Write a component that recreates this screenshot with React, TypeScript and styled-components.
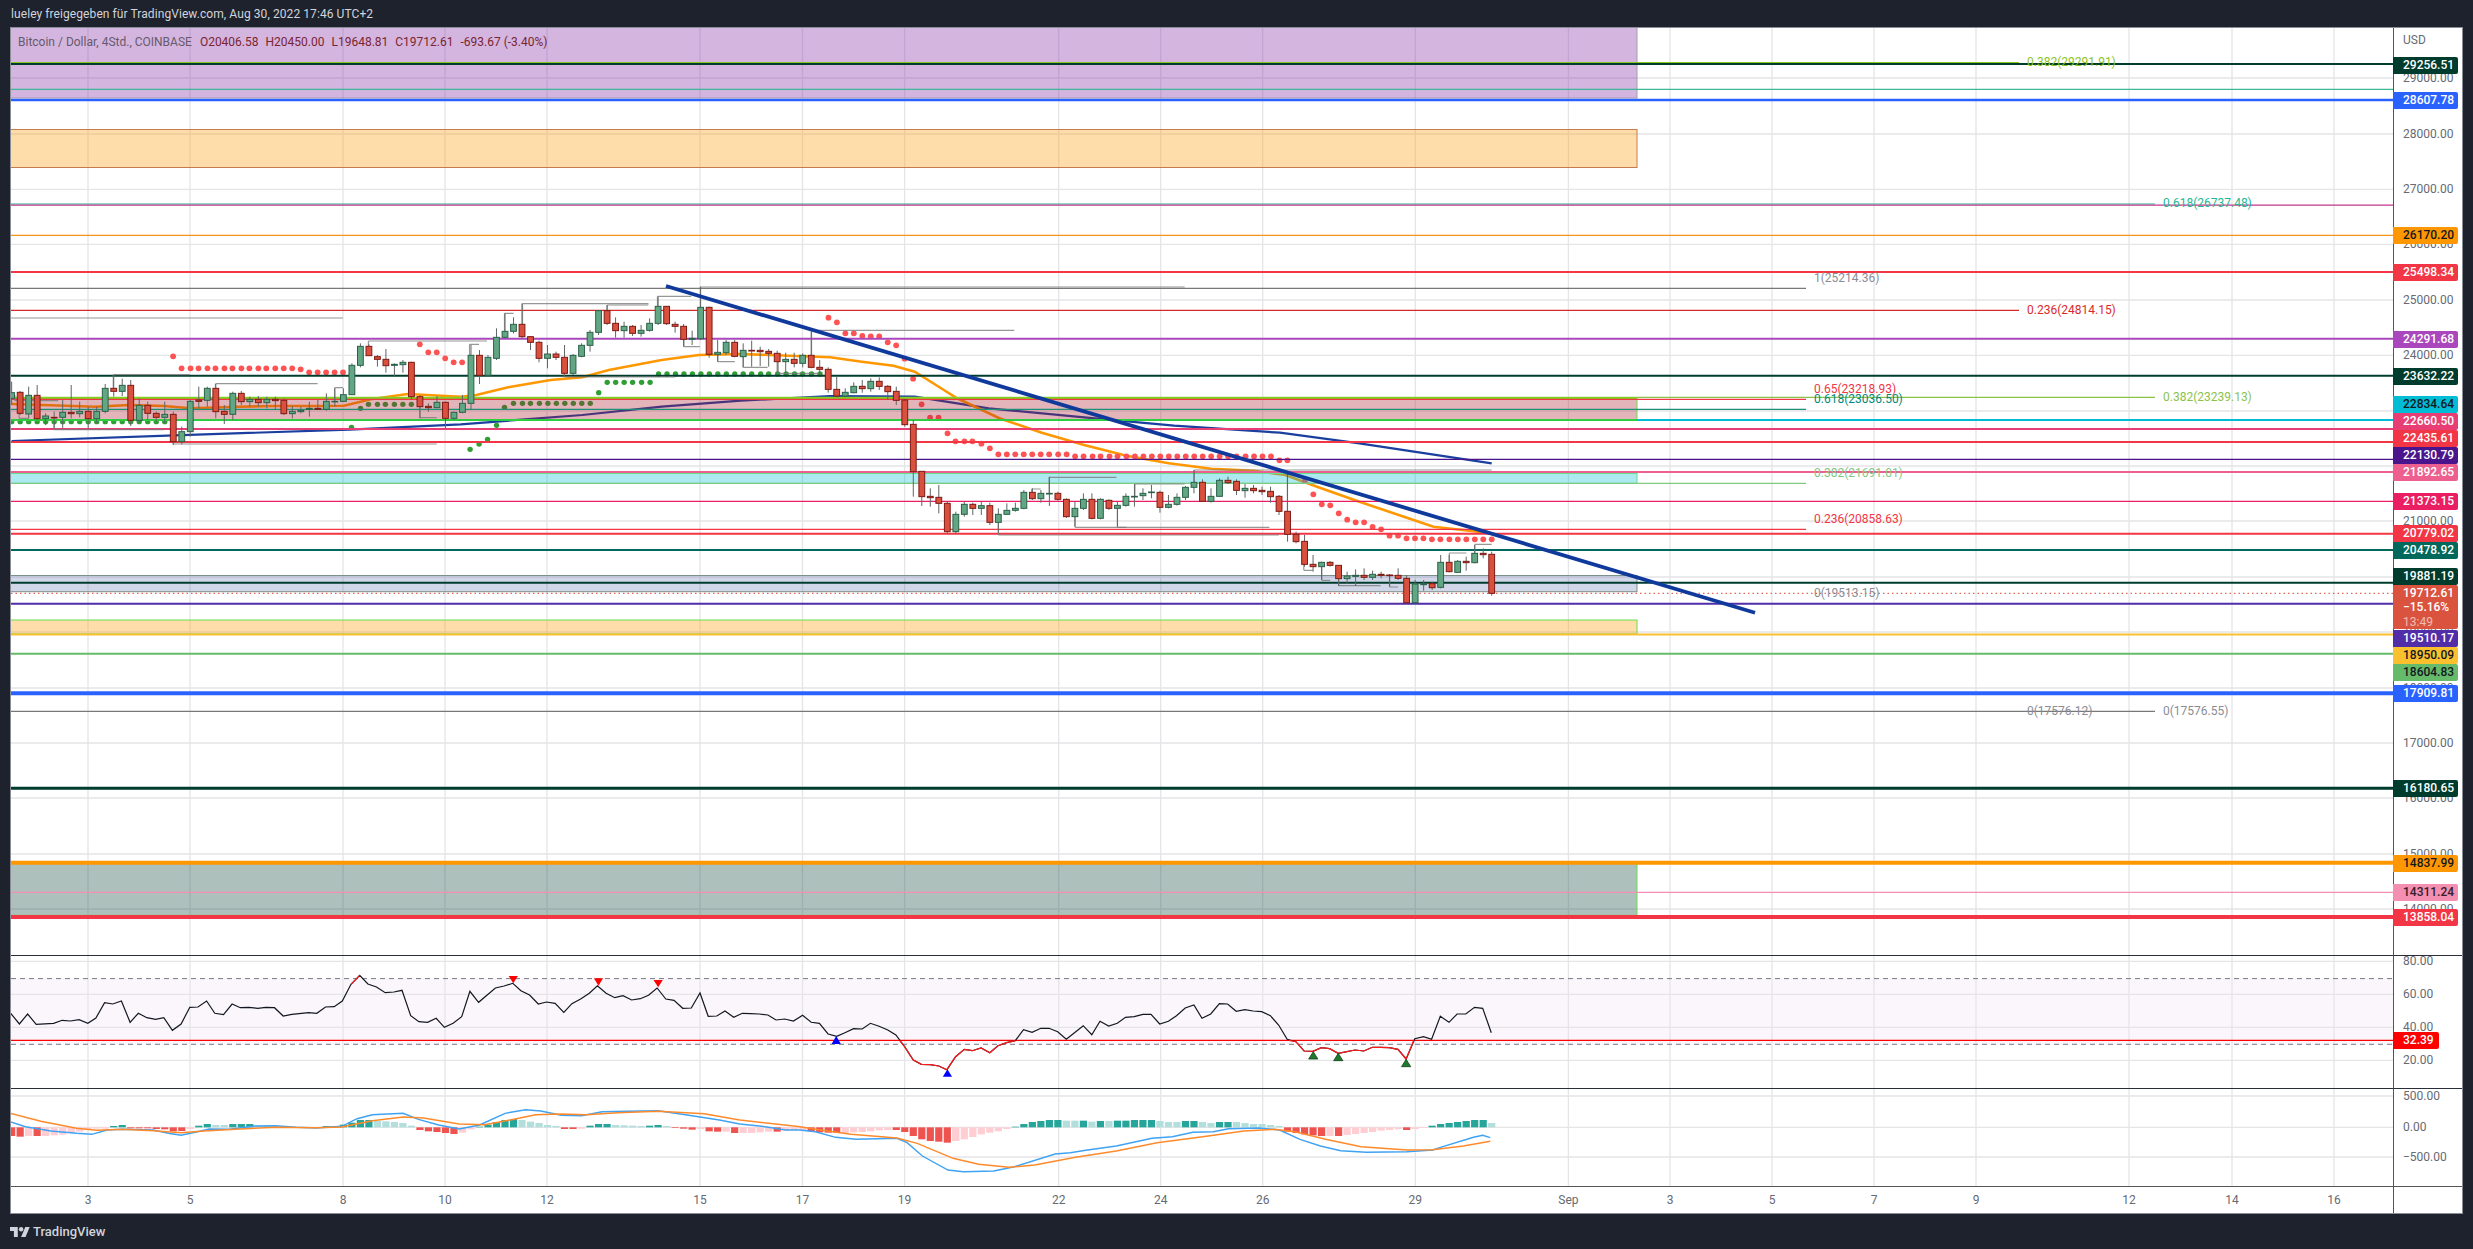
import React from "react";
import styled, { createGlobalStyle } from "styled-components";

const Global = createGlobalStyle`
  html, body { margin: 0; padding: 0; background: #1e222d; }
  body { font-family: Roboto, "Liberation Sans", sans-serif; }
`;

const Page = styled.div`
  width: 2473px;
  height: 1249px;
  background: #1e222d;
  display: flex;
  flex-direction: column;
  overflow: hidden;
`;
const Header = styled.header`
  height: 27px;
  padding-left: 11px;
  display: flex;
  align-items: center;
  color: #d1d4dc;
  font-size: 12px;
  letter-spacing: 0.08px;
`;
const Frame = styled.main`
  width: 2453px;
  margin-left: 10px;
  box-sizing: border-box;
  background: #fff;
  border: 1px solid #8a8d96;
  display: grid;
  grid-template-columns: 2382px 69px;
  grid-template-rows: 928px 133px 98px 26px;
`;
const ChartPane = styled.section<{ $line?: string }>`
  position: relative;
  box-sizing: border-box;
  border-bottom: 1px solid ${(p) => p.$line || "transparent"};
`;
const AxisPane = styled.section<{ $line?: string }>`
  position: relative;
  box-sizing: border-box;
  border-left: 1px solid #555;
  border-bottom: 1px solid ${(p) => p.$line || "transparent"};
`;
const PaneSvg = styled.svg`
  display: block;
`;
const Legend = styled.div`
  position: absolute;
  left: 7px;
  top: 7px;
  display: flex;
  gap: 7px;
  font-size: 12px;
  line-height: 15px;
  white-space: nowrap;
`;
const LegendTitle = styled.span`
  color: #675a6d;
  margin-right: 1px;
`;
const LegendValue = styled.span`
  color: #7c2430;
`;
const FibText = styled.text`
  font-family: Roboto, "Liberation Sans", sans-serif;
  font-size: 12px;
  dominant-baseline: central;
`;
const Unit = styled.div`
  position: absolute;
  left: 9px;
  top: 5px;
  font-size: 12px;
  line-height: 15px;
  color: #666a73;
`;
const ScaleLabel = styled.div`
  position: absolute;
  left: 9px;
  font-size: 12px;
  line-height: 16px;
  height: 16px;
  margin-top: -8px;
  color: #666a73;
`;
const Tag = styled.div<{ $bg: string; $fg: string }>`
  position: absolute;
  left: -1px;
  width: 65px;
  height: 17px;
  box-sizing: border-box;
  padding-left: 10px;
  font-size: 12px;
  font-weight: 500;
  line-height: 17px;
  background: ${(p) => p.$bg};
  color: ${(p) => p.$fg};
  border-radius: 0 2px 2px 0;
`;
const CountdownTag = styled.div`
  position: absolute;
  left: -1px;
  top: 557px;
  width: 65px;
  height: 44px;
  box-sizing: border-box;
  padding: 1px 0 0 10px;
  font-size: 12px;
  font-weight: 500;
  line-height: 14.3px;
  background: #d9533f;
  color: #fff;
  border-radius: 0 2px 2px 0;
`;
const CountdownFaint = styled.div`
  opacity: 0.6;
  font-weight: 400;
`;
const RsiTag = styled(Tag)`
  width: 46px;
`;
const TimeAxis = styled.div`
  position: relative;
  height: 26px;
`;
const TimeLabel = styled.span`
  position: absolute;
  top: 6px;
  transform: translateX(-50%);
  font-size: 12px;
  line-height: 15px;
  color: #666a73;
`;
const Corner = styled.div`
  border-left: 1px solid #555;
`;
const Footer = styled.footer`
  flex: 1;
  padding-left: 10px;
  display: flex;
  align-items: center;
  gap: 3px;
  color: #d1d4dc;
  font-size: 13px;
  font-weight: 500;
`;

// coordinate helpers: crops of the chart mapped back to page pixels
const x2 = (p: number) => p / 1.889;
const x3 = (p: number) => 830 + p / 1.889;
const yy = (p: number) => 280 + p / 3;
const x7 = (p: number) => p / 1.96;
const x8 = (p: number) => 800 + p / 1.96;
const y7 = (p: number) => 950 + p / 3;
type P = number[];
const pts = (l: P[], fx: (n: number) => number, fy: (n: number) => number) =>
  l.map((a) => `${fx(a[0]).toFixed(1)},${fy(a[1]).toFixed(1)}`).join(" ");

const LEFT = 11;
const RIGHT = 2393;
const RECT_END = 1637;
const barX = (i: number) => 11.65 + 8.506 * i;

const priceGrid = [78, 134, 189.3, 244.3, 300, 355.3, 411, 466, 521, 577, 632, 688, 743, 798, 854, 909];
const dayGrid = [88, 190, 343, 445, 547, 700, 802.5, 904.6, 1058.7, 1160.7, 1262.7, 1415.3, 1568.4, 1670, 1772, 1874, 1976, 2129, 2232, 2334];
const dayLabels = ["3", "5", "8", "10", "12", "15", "17", "19", "22", "24", "26", "29", "Sep", "3", "5", "7", "9", "12", "14", "16"];

const zones = [
  { y1: 27, y2: 98, fill: "rgba(140,60,170,.38)", line: "#a99bb0" },
  { y1: 129.5, y2: 167.5, fill: "rgba(255,152,0,.33)", line: "#c87a4f" },
  { y1: 398, y2: 420, fill: "rgba(170,30,50,.33)", line: "#66e04f" },
  { y1: 473.5, y2: 483.3, fill: "rgba(0,188,212,.32)", line: "#66e08a" },
  { y1: 575.5, y2: 591.7, fill: "rgba(25,55,140,.2)", line: "#7d8f8a" },
  { y1: 620, y2: 634, fill: "rgba(255,152,0,.33)", line: "#66e04f" },
  { y1: 863, y2: 915.3, fill: "rgba(40,90,80,.38)", line: "#66e04f" },
];

const hLines: { y: number; w: number; c: string; x2?: number }[] = [
  { y: 62.7, w: 1.3, c: "#8bc51f", x2: 2019 },
  { y: 64, w: 2, c: "#003c2d" },
  { y: 89.3, w: 1.2, c: "#3cb894" },
  { y: 100, w: 2.4, c: "#2962ff" },
  { y: 204, w: 1.2, c: "#22b893", x2: 2155 },
  { y: 205.2, w: 1.2, c: "#c2368c" },
  { y: 235.3, w: 1.3, c: "#f7941d" },
  { y: 272, w: 2, c: "#f23645" },
  { y: 288.3, w: 1.3, c: "#787878", x2: 1806 },
  { y: 310.3, w: 1.3, c: "#d92a2a", x2: 2019 },
  { y: 338.7, w: 2, c: "#ab47bc" },
  { y: 375.7, w: 2, c: "#003c2d" },
  { y: 397.3, w: 1.3, c: "#8bc34a", x2: 2155 },
  { y: 398, w: 2, c: "#7ed321", x2: RECT_END },
  { y: 399.3, w: 1.2, c: "#f23645", x2: 1806 },
  { y: 409.3, w: 1.2, c: "#1d8f78", x2: 1806 },
  { y: 420, w: 2, c: "#00bcd4" },
  { y: 420, w: 2, c: "#2ecc40", x2: RECT_END },
  { y: 429, w: 2, c: "#e83e76" },
  { y: 442, w: 2, c: "#f23645" },
  { y: 459.3, w: 1.3, c: "#4a148c" },
  { y: 472, w: 2, c: "#ec5f8f" },
  { y: 483.3, w: 1.2, c: "#7fca85", x2: 1806 },
  { y: 501.3, w: 1.3, c: "#e91e63" },
  { y: 529.3, w: 1.2, c: "#f23645", x2: 1806 },
  { y: 533.7, w: 2, c: "#f23645" },
  { y: 550, w: 2, c: "#00695c" },
  { y: 582.7, w: 2, c: "#003c2d" },
  { y: 603.7, w: 2, c: "#512da8" },
  { y: 634.5, w: 2, c: "#fbc02d" },
  { y: 653.7, w: 2, c: "#66bb6a" },
  { y: 693.3, w: 4, c: "#2962ff" },
  { y: 711.3, w: 1.2, c: "#787878", x2: 2155 },
  { y: 788.3, w: 3, c: "#003c2d" },
  { y: 862.7, w: 4, c: "#ff9800" },
  { y: 892.3, w: 1.3, c: "#f48fb1" },
  { y: 917, w: 4, c: "#f23645" },
];

const fibTexts = [
  { x: 2027, y: 61.7, t: "0.382(29291.91)", c: "#8bc51f" },
  { x: 2163, y: 203, t: "0.618(26737.48)", c: "#22b893" },
  { x: 1814, y: 278, t: "1(25214.36)", c: "#8a8d96" },
  { x: 2027, y: 310, t: "0.236(24814.15)", c: "#d92a2a" },
  { x: 1814, y: 388.7, t: "0.65(23218.93)", c: "#f23645" },
  { x: 1814, y: 398.7, t: "0.618(23036.50)", c: "#00897b" },
  { x: 2163, y: 397, t: "0.382(23239.13)", c: "#8bc34a" },
  { x: 1814, y: 472.7, t: "0.382(21691.01)", c: "#81c784" },
  { x: 1814, y: 518.7, t: "0.236(20858.63)", c: "#f23645" },
  { x: 1814, y: 593.3, t: "0(19513.15)", c: "#8a8d96" },
  { x: 2027, y: 711, t: "0(17576.12)", c: "#8a8d96" },
  { x: 2163, y: 711, t: "0(17576.55)", c: "#8a8d96" },
];

// wickTop bodyTop bodyBottom wickBottom colour
const candleData =
  "305 338 355 375 g,333 337 400 405 r,320 346 402 415 g,315 346 416 420 r,400 408 416 435 g,395 412 414 445 r,360 397 412 445 g,315 397 401 415 r,365 394 401 412 g,380 394 416 445 r,380 394 416 430 g,312 325 394 400 g,285 325 334 350 r,296 316 334 348 g,300 316 421 438 r,355 376 421 430 g,365 376 400 420 r,395 400 412 425 r,365 403 412 430 g,395 403 485 495 r,440 455 485 493 g,360 364 455 470 g,320 360 364 385 r,320 325 361 380 g,312 325 395 415 r,375 394 403 432 r,335 340 403 420 g,333 340 365 375 r,350 358 365 380 g,348 358 368 380 r,350 358 368 385 g,350 358 362 390 r,355 361 401 405 r,378 394 401 415 g,380 391 395 400 g,365 385 388 410 g,360 385 388 390 r,340 364 388 392 g,325 364 365 380 g,325 344 364 366 g,250 256 344 345 g,190 199 256 262 g,193 199 227 228 r,225 230 238 260 r,207 238 257 278 r,250 253 256 288 g,240 247 254 278 g,245 247 350 360 r,345 350 380 415 r,370 379 383 395 r,348 367 383 385 g,365 367 415 445 r,395 397 415 420 g,345 370 397 400 g,195 226 370 388 g,210 226 286 312 r,225 232 286 290 g,145 172 235 240 g,100 154 172 175 g,112 133 154 160 g,70 133 170 175 r,168 170 187 210 r,182 187 235 247 r,195 222 235 265 g,215 222 232 240 r,195 232 280 290 r,222 226 280 285 g,190 196 229 232 g,150 157 196 215 g,90 92 157 165 g,75 92 130 135 r,112 130 152 173 r,125 139 152 173 g,135 139 160 168 r,135 151 160 170 g,115 130 151 155 g,50 79 130 135 g,78 79 131 135 r,125 133 139 158 r,132 139 178 200 r,152 175 178 195 g,20 82 176 180 g,80 82 223 233 r,180 217 223 245 g,180 187 218 225 g,180 187 229 232 r,190 211 230 262 g,182 211 213 260 r,200 211 215 258 r,207 214 220 260 r,212 220 245 278 r,218 238 245 280 g,218 238 250 262 r,220 226 250 262 g,155 226 262 265 r,240 262 268 285 r,262 268 328 338 r," +
  "288 328 348 352 r,325 337 348 352 g,307 319 338 340 g,300 319 326 338 r,295 304 326 335 g,292 304 319 330 r,315 319 335 360 r,320 334 361 375 r,358 360 434 440 r,420 433 575 650 r,574 574 650 678 r,625 649 653 680 r,615 652 670 700 r,665 670 755 760 r,695 703 755 760 g,665 673 703 710 g,668 673 685 705 r,665 677 685 705 g,668 677 727 735 r,685 703 727 758 g,670 691 703 705 g,668 685 691 695 g,630 637 685 688 g,625 637 656 660 r,630 640 656 668 g,590 640 642 678 g,635 640 658 662 r,655 658 710 714 r,665 685 710 740 g,640 658 685 690 g,640 658 715 718 r,655 658 715 718 g,658 661 685 690 r,665 676 685 740 g,640 649 676 680 g,612 649 651 680 g,625 640 647 660 g,615 636 638 655 g,632 637 682 698 r,645 673 682 685 g,640 652 673 677 g,618 622 652 660 g,570 607 622 640 g,598 607 664 665 r,625 649 664 668 g,595 601 649 650 g,590 601 608 612 r,598 604 631 645 r,612 625 632 653 g,615 625 632 640 r,620 631 635 645 r,620 634 650 668 r,645 649 694 705 r,580 694 763 785 r,755 763 785 790 r,765 784 853 860 r,825 853 860 875 r,845 847 860 900 g,843 847 856 860 r,855 856 896 918 r,875 888 896 912 g,868 886 889 918 g,865 886 892 900 r,872 883 892 900 g,875 883 886 895 r,882 885 887 920 r,865 886 895 900 r,885 895 968 970 r,900 912 968 970 g,900 911 914 932 g,905 911 923 930 r,825 847 922 925 g,825 847 875 877 r,840 844 877 878 g,830 844 848 872 r,795 820 848 850 g,805 820 824 835 r,815 823 940 947 r";
const candles = candleData.split(",").map((s, i) => {
  const a = s.trim().split(" ");
  return { x: barX(i), wt: yy(+a[0]), t: yy(+a[1]), b: yy(+a[2]), wb: yy(+a[3]), up: a[4] === "g" };
});

const orangeA = [[22,372],[80,375],[180,380],[245,375],[310,378],[360,385],[450,380],[520,378],[600,378],[650,377],[700,358],[770,342],[870,350],[900,345],[960,322],[1040,300],[1100,292],[1150,270],[1250,240],[1320,225],[1400,222],[1568,232]];
const orangeB = [[60,245],[120,257],[160,275],[200,315],[240,355],[320,415],[400,458],[480,495],[560,527],[640,550],[720,566],[800,572],[860,585],[920,620],[1000,665],[1080,708],[1140,740],[1250,760]];
const blueA = [[22,483],[330,466],[660,449],[870,433],[1100,405],[1250,380],[1400,362],[1568,348]];
const blueB = [[160,350],[300,385],[500,415],[650,437],[850,458],[1000,490],[1250,550]];
const maOrange = pts(orangeA, x2, yy) + " " + pts(orangeB, x3, yy);
const maBlue = pts(blueA, x2, yy) + " " + pts(blueB, x3, yy);

const seq = (from: number, n: number) => Array.from({ length: n }, (_, i) => from + i);

const redDots: number[][] = [
  [x2(327), yy(229)],
  ...[343,360,375,392,407,424,439,456,471,488,503,520,536,552].map((p) => [x2(p), yy(265)]),
  [x2(568), yy(268)],
  ...[584,600,616,632,648].map((p) => [x2(p), yy(277)]),
  [x2(793), yy(193)],
  [x2(809), yy(217)],
  [x2(825), yy(217)],
  [x2(841), yy(235)],
  [x2(857), yy(247)],
  [x2(873), yy(247)],
  [x2(1565), yy(113)],
  ...[[13,127],[29,160],[45,160],[61,168],[77,169],[93,169],[109,187],[125,196],[141,236],[157,296],[173,373],[189,413],[205,413],[222,460],[237,484],[254,484],[269,484],[286,491],[302,505]].map((a) => [x3(a[0]), yy(a[1])]),
  ...[318,334,350,366,382,398,414,431,447].map((p) => [x3(p), yy(523)]),
  ...[463,479,496,511,528,543,560,576,592,608,624,640,656,672,688,704,720,736,752,768,785,801,817,833].map((p) => [x3(p), yy(529)]),
  [x3(849), yy(541)],
  [x3(864), yy(541)],
  ...[[897,602],[913,643],[929,673],[945,676],[961,700],[977,719],[993,727],[1009,727],[1025,741],[1041,748],[1057,767],[1073,767],[1089,775],[1105,775],[1121,775],[1137,778],[1153,778],[1170,778],[1186,778],[1202,778],[1218,778],[1234,778],[1250,778]].map((a) => [x3(a[0]), yy(a[1])]),
];
const greenDots: number[][] = [
  ...seq(0, 19).map((i) => [barX(i), yy(425)]),
  [x2(664), yy(442)],
  [x2(681), yy(385)],
  ...[696,713,728,745,761,777].map((p) => [x2(p), yy(373)]),
  [x2(888), yy(508)],
  [x2(905), yy(492)],
  [x2(921), yy(478)],
  [x2(938), yy(436)],
  [x2(953), yy(382)],
  ...[970,987,1002,1019,1035,1051,1067,1083,1099,1115].map((p) => [x2(p), yy(370)]),
  [x2(1131), yy(338)],
  ...[1147,1163,1179,1195,1212,1228].map((p) => [x2(p), yy(307)]),
  ...[1244,1260,1276,1292,1308,1324,1340,1356,1372,1388,1404,1420,1437,1452,1469,1485,1501,1516,1533,1549].map((p) => [x2(p), yy(282)]),
];

// step-line pivots: x from, x to, y, optional vertical run at x from
const pivotsA = [
  [20,648,114],[214,358,284,325],[407,600,311,325],[632,648,323,364],[696,920,183,199],[887,905,193,226],[953,970,100,154],[987,1225,71,133],[1147,1225,75,92],[1242,1306,49,79],[1323,1568,21,82],[1533,1568,151,226],[1066,1275,291,280],[1356,1388,245,223],[1404,1450,262,230],[1292,1322,200,178],[1470,1550,280,245],[327,825,492,485],[793,825,413,380],[102,310,449,430],[36,54,415,400],[28,110,362,345],
];
const pivotsB = [
  [0,670,21],[0,348,151],[414,541,592,640],[576,670,612,649],[381,398,627,637],[688,1250,570,607],[864,880,580,694],[463,830,742,710],[543,560,742,685],[318,848,765,727],[895,912,871,853],[929,945,901,860],[961,1040,917,896],[1057,1073,921,887],[1170,1202,819,847],[1218,1250,793,820],
];

const priceScale = [[78,"29000.00"],[134,"28000.00"],[189.3,"27000.00"],[244.3,"26000.00"],[300,"25000.00"],[355.3,"24000.00"],[411,"23000.00"],[466,"22000.00"],[521,"21000.00"],[577,"20000.00"],[632,"19000.00"],[688,"18000.00"],[743,"17000.00"],[798,"16000.00"],[854,"15000.00"],[909,"14000.00"]] as [number, string][];

const tags = [
  [56.5,"29256.51","#003c2d","#fff"],[92,"28607.78","#2962ff","#fff"],[227,"26170.20","#ff9800","#131722"],[264,"25498.34","#f23645","#fff"],[331,"24291.68","#ab47bc","#fff"],[368,"23632.22","#003c2d","#fff"],[396,"22834.64","#00bcd4","#131722"],[413,"22660.50","#e83e76","#fff"],[430,"22435.61","#f23645","#fff"],[447,"22130.79","#4a148c","#fff"],[464,"21892.65","#ec5f8f","#fff"],[493,"21373.15","#e91e63","#fff"],[525,"20779.02","#f23645","#fff"],[542,"20478.92","#00695c","#fff"],[568,"19881.19","#003c2d","#fff"],[630,"19510.17","#512da8","#fff"],[647,"18950.09","#fbc02d","#131722"],[664,"18604.83","#66bb6a","#131722"],[685,"17909.81","#2962ff","#fff"],[780,"16180.65","#003c2d","#fff"],[855,"14837.99","#ff9800","#131722"],[884,"14311.24","#f48fb1","#33202a"],[909,"13858.04","#f23645","#fff"],
] as [number, string, string, string][];

const rsi7 = [[20,188],[38,222],[54,192],[71,223],[105,220],[122,211],[138,213],[155,209],[172,220],[188,204],[205,158],[221,162],[238,153],[255,217],[271,190],[288,203],[305,208],[321,203],[338,241],[355,222],[372,172],[388,171],[405,153],[421,190],[438,194],[455,162],[471,173],[488,172],[505,175],[521,172],[538,173],[555,198],[572,193],[605,188],[621,190],[638,171],[655,170],[671,153],[688,103],[705,76],[721,102],[738,111],[755,128],[772,126],[788,121],[805,197],[821,215],[838,217],[855,205],[871,232],[888,220],[905,200],[921,124],[938,157],[955,135],[971,114],[988,108],[1005,100],[1021,122],[1038,135],[1055,162],[1071,156],[1088,160],[1105,187],[1121,161],[1138,147],[1155,130],[1171,107],[1188,130],[1205,143],[1221,137],[1238,150],[1255,146],[1271,136],[1288,114],[1305,147],[1321,151],[1338,175],[1355,174],[1372,129],[1388,199],[1405,198],[1421,183],[1438,202],[1455,190],[1471,191],[1488,192],[1505,195],[1521,210],[1538,207],[1555,213]];
const rsi8 = [[5,196],[22,217],[38,220],[55,252],[72,259],[88,248],[105,236],[122,237],[138,220],[155,229],[172,240],[188,255],[205,290],[222,330],[238,343],[255,344],[272,348],[288,359],[305,320],[322,298],[338,302],[355,294],[372,308],[388,287],[405,278],[422,272],[438,239],[455,247],[472,235],[488,235],[505,245],[522,268],[538,248],[555,227],[572,254],[588,214],[605,228],[622,220],[638,202],[655,200],[672,193],[688,193],[705,222],[722,214],[738,197],[755,174],[772,165],[788,205],[805,192],[822,161],[838,162],[855,184],[872,179],[888,183],[905,185],[922,197],[938,225],[955,268],[972,275],[988,303],[1005,304],[1022,293],[1038,296],[1055,310],[1072,305],[1088,300],[1105,303],[1122,292],[1138,292],[1155,293],[1172,298],[1188,327],[1205,266],[1222,260],[1238,268],[1255,199],[1272,217],[1288,192],[1305,192],[1322,172],[1338,175],[1355,248]];
const rsiLine = pts(rsi7, x7, y7) + " " + pts(rsi8, x8, y7);
const rsiRed = [
  pts([[688,103],[705,76]], x7, y7),
  pts([[195,271], ...rsi8.filter((a) => a[0] >= 205 && a[0] <= 422)], x8, y7),
  pts([[958,271], ...rsi8.filter((a) => a[0] >= 972 && a[0] <= 1188), [1203,271]], x8, y7),
];
const tri = (px: number, top: number, bot: number, fx: (n: number) => number, down: boolean) => {
  const c = fx(px);
  const w = 4.6;
  return down
    ? `${c - w},${y7(top)} ${c + w},${y7(top)} ${c},${y7(bot)}`
    : `${c - w},${y7(bot)} ${c + w},${y7(bot)} ${c},${y7(top)}`;
};

const histData =
  "558r 560r 558p 558r 558p 556p 554p 548p 545p 540p 536p 536p 528t 525t 535r 535r 535r 537r 538r 544r 543r 537p 527t 522t 525l 525l 522t 522t 522t 527l 528l 529l 531l 531l 534p 534p 534p 528t 528t 524t 518t 510t 510t 513l 514l 516l 519l 527l 540r 544r 546r 549r 552r 548p 538p 530t 524t 516t 510t 507t 510l 515l 519l 525l 528l 537r 537r 536p 527t 522t 522t 525l 526l 527l 528l 527t 525t 528l 534r 536r 539r 537p 544r 545r 545p 549r 549p 549p 547p 545p 545r 542p 540p " +
  "540p 544r 547r 548r 548r 549p 547p 546p 544p 541p 540p 540r 546r 558r 568r 573r 575r 578r 573p 568p 561p 553p 548p 544p 537p 530t 522t 516t 513t 510t 510t 512l 512l 512t 515l 513t 513l 512t 512t 510t 510t 510t 513l 516l 516l 513t 513t 516l 519l 516t 516t 516l 519l 522l 522l 525l 528l 545r 549r 553r 556r 558r 558p 558r 555p 552p 549p 546p 542p 540p 538p 540r 537p 534p 527t 522t 519t 516t 513t 510t 510t 519l";
const histColors: Record<string, string> = { r: "#ef5350", p: "#ffcdd2", t: "#26a69a", l: "#b2dfdb" };
const hist = histData.split(" ").map((s, i) => ({ x: barX(i), py: +s.slice(0, -1), c: histColors[s.slice(-1)] }));

const macdBlue = pts([[20,515],[50,530],[100,543],[150,550],[180,553],[210,540],[240,538],[300,540],[330,550],[355,556],[385,546],[410,537],[450,538],[500,528],[540,527],[580,532],[620,534],[670,529],[700,506],[730,494],[790,490],[820,508],[860,525],[900,537],[940,525],[990,490],[1030,479],[1060,483],[1100,496],[1140,497],[1180,485],[1230,484],[1290,482],[1350,496],[1410,510],[1450,522],[1500,530],[1540,540],[1568,540]], x7, y7) + " " +
  pts([[30,545],[70,562],[110,568],[190,565],[210,578],[240,618],[290,660],[320,665],[380,663],[420,650],[500,612],[530,608],[560,601],[620,588],[690,565],[730,560],[770,547],[810,545],[840,536],[900,534],[940,540],[980,568],[1020,588],[1060,602],[1110,607],[1190,605],[1240,600],[1260,590],[1320,562],[1338,556],[1353,563]], x8, y7);
const macdOrange = pts([[20,490],[80,514],[150,535],[190,541],[240,538],[300,542],[355,548],[400,543],[470,537],[540,532],[620,533],[670,531],[730,512],[790,501],[830,504],[900,522],[950,524],[1000,510],[1050,494],[1100,492],[1150,494],[1210,488],[1290,484],[1380,491],[1450,510],[1568,530]], x7, y7) + " " +
  pts([[40,540],[100,553],[190,564],[230,580],[300,625],[350,643],[410,652],[460,645],[540,622],[620,603],[700,578],[800,558],[870,543],[930,538],[970,545],[1030,568],[1100,590],[1190,600],[1240,599],[1300,588],[1353,574]], x8, y7);

const Grid = ({ ys, top, bottom }: { ys: number[]; top: number; bottom: number }) => (
  <g stroke="#e5e5e8" strokeWidth="1.3">
    {dayGrid.map((x) => (
      <line key={x} x1={x} x2={x} y1={top} y2={bottom} />
    ))}
    {ys.map((y) => (
      <line key={y} x1={LEFT} x2={RIGHT} y1={y} y2={y} />
    ))}
  </g>
);

const MainChart = () => (
  <PaneSvg width={2382} height={927} viewBox="11 28 2382 927">
    <Grid ys={priceGrid} top={28} bottom={955} />
    <polyline points={maBlue} fill="none" stroke="#1b3f9e" strokeWidth="2.2" />
    <polyline points={maOrange} fill="none" stroke="#ff9800" strokeWidth="2.6" />
    {redDots.map((d, i) => (
      <circle key={i} cx={d[0]} cy={d[1]} r="2.9" fill="#ff5252" />
    ))}
    {greenDots.map((d, i) => (
      <circle key={i} cx={d[0]} cy={d[1]} r="2.7" fill="#2e9e35" />
    ))}
    {zones.map((z) => (
      <rect key={z.y1} x={LEFT - 2} y={z.y1} width={RECT_END - LEFT + 2} height={z.y2 - z.y1} fill={z.fill} stroke={z.line} strokeWidth="1" />
    ))}
    {hLines.map((l, i) => (
      <line key={i} x1={LEFT} x2={l.x2 || RIGHT} y1={l.y} y2={l.y} stroke={l.c} strokeWidth={l.w} />
    ))}
    <line x1={LEFT} x2={RIGHT} y1="593.3" y2="593.3" stroke="#e0402f" strokeWidth="1" strokeDasharray="1.5 3" />
    <g stroke="#7a7a7a" strokeWidth="1.2" strokeOpacity="0.78" fill="none">
      {pivotsA.map((p, i) => (
        <path key={i} d={`M${x2(p[0])} ${yy(p[2])}H${x2(p[1])}${p[3] ? `M${x2(p[0])} ${yy(p[2])}V${yy(p[3])}` : ""}`} />
      ))}
      {pivotsB.map((p, i) => (
        <path key={i} d={`M${x3(p[0])} ${yy(p[2])}H${x3(p[1])}${p[3] ? `M${x3(p[0])} ${yy(p[2])}V${yy(p[3])}` : ""}`} />
      ))}
    </g>
    {candles.map((c, i) => (
      <g key={i}>
        <line x1={c.x} x2={c.x} y1={c.wt} y2={c.wb} stroke="#5f6664" strokeWidth="1" />
        <rect
          x={c.x - 2.9}
          y={c.t}
          width={5.8}
          height={Math.max(c.b - c.t, 0.6)}
          fill={c.up ? "#62a683" : "#d9513e"}
          stroke={c.up ? "#2a6249" : "#7e1a14"}
          strokeWidth="1"
        />
      </g>
    ))}
    <line x1="666" y1="286" x2="1755" y2="612.7" stroke="#0f3a9c" strokeWidth="3.8" />
    {fibTexts.map((f) => (
      <FibText key={f.t + f.x} x={f.x} y={f.y} fill={f.c}>
        {f.t}
      </FibText>
    ))}
  </PaneSvg>
);

const RsiChart = () => (
  <PaneSvg width={2382} height={132} viewBox="11 956 2382 132">
    <rect x={LEFT} y="978.6" width={RIGHT - LEFT} height="65.7" fill="#faf6fb" />
    <Grid ys={[961.3, 994.3, 1027.3, 1060.3]} top={956} bottom={1088} />
    <g stroke="#787b86" strokeWidth="1" strokeDasharray="5 4">
      <line x1={LEFT} x2={RIGHT} y1="978.6" y2="978.6" />
      <line x1={LEFT} x2={RIGHT} y1="1044.3" y2="1044.3" />
    </g>
    <line x1={LEFT} x2={RIGHT} y1="1040.3" y2="1040.3" stroke="#ff0000" strokeWidth="1.3" />
    <polyline points={rsiLine} fill="none" stroke="#131722" strokeWidth="1.2" />
    {rsiRed.map((s) => (
      <polyline key={s} points={s} fill="none" stroke="#ff1a1a" strokeWidth="1.2" />
    ))}
    <g fill="#ff0000">
      <polygon points={tri(1006, 78, 100, x7, true)} />
      <polygon points={tri(1173, 85, 107, x7, true)} />
      <polygon points={tri(1290, 90, 112, x7, true)} />
    </g>
    <g fill="#0000ff">
      <polygon points={tri(71, 258, 282, x8, false)} />
      <polygon points={tri(289, 358, 380, x8, false)} />
    </g>
    <g fill="#1f7a2c" stroke="#0f3f1a" strokeWidth="0.8">
      <polygon points={tri(1006, 305, 327, x8, false)} />
      <polygon points={tri(1055, 310, 332, x8, false)} />
      <polygon points={tri(1188, 328, 350, x8, false)} />
    </g>
  </PaneSvg>
);

const MacdChart = () => {
  const zero = y7(532);
  return (
    <PaneSvg width={2382} height={97} viewBox="11 1089 2382 97">
      <Grid ys={[1096, 1127.3, 1157]} top={1089} bottom={1186} />
      {hist.map((b, i) => {
        const y = y7(b.py);
        return <rect key={i} x={b.x - 3.6} y={Math.min(y, zero)} width={7.2} height={Math.abs(y - zero)} fill={b.c} />;
      })}
      <polyline points={macdBlue} fill="none" stroke="#3fa2f2" strokeWidth="1.4" />
      <polyline points={macdOrange} fill="none" stroke="#ff8a2b" strokeWidth="1.4" />
    </PaneSvg>
  );
};

const LogoMark = () => (
  <svg width="20" height="10" viewBox="0 4 36 18" fill="#d1d4dc" aria-hidden="true">
    <path d="M14 22H7V11H0V4h14v18zM28 22h-8l7.5-18h8L28 22z" />
    <circle cx="20" cy="8" r="4" />
  </svg>
);

export default function App() {
  return (
    <Page>
      <Global />
      <Header>lueley freigegeben für TradingView.com, Aug 30, 2022 17:46 UTC+2</Header>
      <Frame>
        <ChartPane $line="#2a2e39">
          <MainChart />
          <Legend>
            <LegendTitle>Bitcoin / Dollar, 4Std., COINBASE</LegendTitle>
            <LegendValue>O20406.58</LegendValue>
            <LegendValue>H20450.00</LegendValue>
            <LegendValue>L19648.81</LegendValue>
            <LegendValue>C19712.61</LegendValue>
            <LegendValue>-693.67 (-3.40%)</LegendValue>
          </Legend>
        </ChartPane>
        <AxisPane $line="#2a2e39">
          <Unit>USD</Unit>
          {priceScale.map(([y, t]) => (
            <ScaleLabel key={t} style={{ top: y - 28 }}>
              {t}
            </ScaleLabel>
          ))}
          {tags.map(([y, t, bg, fg]) => (
            <Tag key={t} $bg={bg} $fg={fg} style={{ top: y - 28 }}>
              {t}
            </Tag>
          ))}
          <CountdownTag>
            19712.61
            <div>−15.16%</div>
            <CountdownFaint>13:49</CountdownFaint>
          </CountdownTag>
        </AxisPane>
        <ChartPane $line="#2a2e39">
          <RsiChart />
        </ChartPane>
        <AxisPane $line="#2a2e39">
          {[[961.3, "80.00"], [994.3, "60.00"], [1027.3, "40.00"], [1060.3, "20.00"]].map(([y, t]) => (
            <ScaleLabel key={t as string} style={{ top: (y as number) - 956 }}>
              {t}
            </ScaleLabel>
          ))}
          <RsiTag $bg="#ff0000" $fg="#fff" style={{ top: 76 }}>
            32.39
          </RsiTag>
        </AxisPane>
        <ChartPane $line="#555">
          <MacdChart />
        </ChartPane>
        <AxisPane $line="#555">
          {[[1096, "500.00"], [1127.3, "0.00"], [1157, "−500.00"]].map(([y, t]) => (
            <ScaleLabel key={t as string} style={{ top: (y as number) - 1089 }}>
              {t}
            </ScaleLabel>
          ))}
        </AxisPane>
        <TimeAxis>
          {dayGrid.map((x, i) => (
            <TimeLabel key={x} style={{ left: x - 11 }}>
              {dayLabels[i]}
            </TimeLabel>
          ))}
        </TimeAxis>
        <Corner />
      </Frame>
      <Footer>
        <LogoMark />
        <span>TradingView</span>
      </Footer>
    </Page>
  );
}
